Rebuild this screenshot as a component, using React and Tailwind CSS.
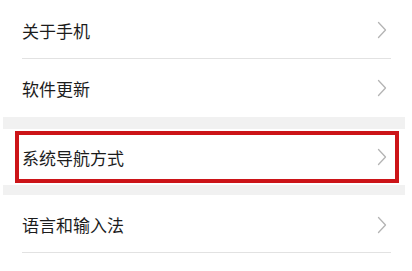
const Chevron = () => (
  <svg width="10" height="18" viewBox="0 0 10 18" fill="none" className="shrink-0">
    <path d="M1.5 1.5 L8.5 9 L1.5 16.5" stroke="#b4b4b4" strokeWidth="1.3" strokeLinecap="round" strokeLinejoin="round" />
  </svg>
);

const Row = ({ label, className = '' }) => (
  <div className={`flex items-center justify-between pl-[22px] pr-[25px] bg-white ${className}`}>
    <span className="text-[17px] text-[#1c1c1c] leading-none">{label}</span>
    <Chevron />
  </div>
);

const Divider = () => <div className="h-px bg-[#e2e2e2] ml-[22px] mr-[21px]" />;

export default function App() {
  return (
    <div
      className="w-[412px] h-[271px] bg-white overflow-hidden"
      style={{ fontFamily: '"Noto Sans CJK SC", "Noto Sans", sans-serif' }}
    >
      <Row label="关于手机" className="h-[58px] pt-[2px]" />
      <Divider />
      <Row label="软件更新" className="h-[58px]" />

      <div className="ml-[3px] mr-[7px] h-[12px] bg-[#f1f1f1]" />
      <div className="relative">
        <Row label="系统导航方式" className="h-[56px]" />
        <div className="absolute left-[15px] top-[2px] w-[384px] h-[52px] border-4 border-[#cc1418]" />
      </div>
      <div className="ml-[3px] mr-[7px] h-[10px] bg-[#f1f1f1]" />

      <Row label="语言和输入法" className="h-[57px] pt-[2px]" />
      <Divider />
    </div>
  );
}
